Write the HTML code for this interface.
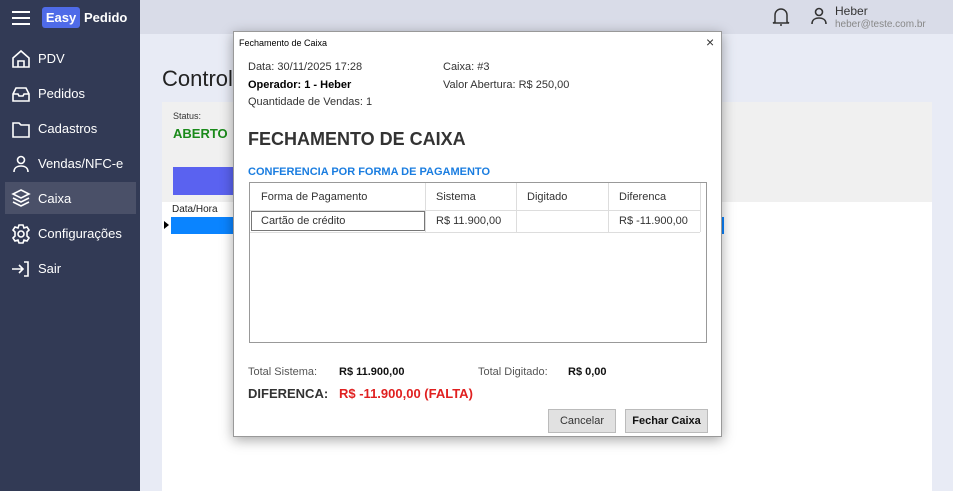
<!DOCTYPE html><html><head><style>
*{margin:0;padding:0;box-sizing:border-box}
body{width:953px;height:491px;overflow:hidden;font-family:"Liberation Sans",sans-serif;background:#e8ebf5;position:relative}
.a{position:absolute}
.side{left:0;top:0;width:140px;height:491px;background:#323a55;color:#fff}
.nav{left:5px;width:131px;height:31px;font-size:13px;display:flex;align-items:center;padding-left:5px}
.nav svg{width:22px;height:22px;margin-right:6px;fill:none;stroke:#fff;stroke-width:1.6}
.t{font-size:11px;color:#333}
</style></head><body>
<div class="a side">
<div class="a" style="left:12px;top:11px;width:18px;height:2px;background:#fff;box-shadow:0 6px 0 #fff,0 12px 0 #fff"></div>
<div class="a" style="left:42px;top:7px;width:38px;height:21px;background:#4f6be8;border-radius:3px;font-size:13px;font-weight:bold;text-align:center;line-height:21px">Easy</div>
<div class="a" style="left:84px;top:7px;font-size:13px;font-weight:bold;line-height:21px">Pedido</div>
<div class="a nav" style="top:43px"><svg viewBox="0 0 22 22"><path d="M3 10L11 3l8 7v9H3z M8 19v-6h6v6"/></svg>PDV</div>
<div class="a nav" style="top:78px"><svg viewBox="0 0 22 22"><path d="M3 11l3-6h10l3 6v7H3z M3 11h5l1 2h4l1-2h5"/></svg>Pedidos</div>
<div class="a nav" style="top:113px"><svg viewBox="0 0 22 22"><path d="M3 5h6l2 2h8v12H3z"/></svg>Cadastros</div>
<div class="a nav" style="top:148px"><svg viewBox="0 0 22 22"><circle cx="11" cy="7" r="3.5"/><path d="M4 19c0-4 3-6 7-6s7 2 7 6"/></svg>Vendas/NFC-e</div>
<div class="a nav" style="top:182px;background:#4a5068;height:32px"><svg viewBox="0 0 22 22"><path d="M11 3l8 4-8 4-8-4z M3 11l8 4 8-4 M3 15l8 4 8-4"/></svg>Caixa</div>
<div class="a nav" style="top:218px"><svg viewBox="0 0 22 22"><circle cx="11" cy="11" r="3"/><path d="M9 2h4l1 3 3-1 2 3-2 2v4l2 2-2 3-3-1-1 3H9l-1-3-3 1-2-3 2-2V9L3 7l2-3 3 1z"/></svg>Configurações</div>
<div class="a nav" style="top:253px"><svg viewBox="0 0 22 22"><path d="M2 11h11 M9 7l4 4-4 4 M14 4h4v14h-4"/></svg>Sair</div>
</div>
<div class="a" style="left:140px;top:0;width:813px;height:34px;background:#d9dce8"></div>
<svg class="a" style="left:770px;top:6px" width="22" height="22" viewBox="0 0 22 22" fill="none" stroke="#333" stroke-width="1.5"><path d="M5 16V9a6 6 0 0112 0v7l2 1H3z M10 19h2"/></svg>
<svg class="a" style="left:808px;top:5px" width="22" height="22" viewBox="0 0 22 22" fill="none" stroke="#333" stroke-width="1.6"><circle cx="11" cy="7" r="3.5"/><path d="M4 19c0-4 3-6 7-6s7 2 7 6"/></svg>
<div class="a" style="left:835px;top:4px;font-size:12px;color:#333">Heber</div>
<div class="a" style="left:835px;top:19px;font-size:10px;color:#888">heber@teste.com.br</div>
<div class="a" style="left:162px;top:66px;font-size:22px;color:#222">Controle</div>
<div class="a" style="left:162px;top:102px;width:770px;height:100px;background:#f0f0f0"></div>
<div class="a" style="left:162px;top:202px;width:770px;height:289px;background:#fff"></div>
<div class="a" style="left:173px;top:111px;font-size:9px;color:#333">Status:</div>
<div class="a" style="left:173px;top:126px;font-size:13px;color:#1a8a1a;font-weight:bold">ABERTO</div>
<div class="a" style="left:173px;top:167px;width:62px;height:28px;background:#5a62f0"></div>
<div class="a" style="left:172px;top:204px;font-size:10px;color:#222">Data/Hora</div>
<div class="a" style="left:171px;top:217px;width:553px;height:17px;background:#0a84ff"></div>
<div class="a" style="left:164px;top:221px;border-left:5px solid #000;border-top:4px solid transparent;border-bottom:4px solid transparent"></div>
<div class="a" style="left:233px;top:31px;width:489px;height:406px;background:#fff;border:1px solid #999;box-shadow:0 3px 12px rgba(0,0,0,.35)">
<div class="a" style="left:5px;top:6px;font-size:9px;color:#000">Fechamento de Caixa</div>
<div class="a" style="left:472px;top:2px;font-size:14px;color:#333">×</div>
<div class="a t" style="left:14px;top:29px">Data: 30/11/2025 17:28</div>
<div class="a t" style="left:14px;top:47px;font-weight:bold;color:#000">Operador: 1 - Heber</div>
<div class="a t" style="left:14px;top:64px">Quantidade de Vendas: 1</div>
<div class="a t" style="left:209px;top:29px">Caixa: #3</div>
<div class="a t" style="left:209px;top:47px">Valor Abertura: R$ 250,00</div>
<div class="a" style="left:14px;top:97px;font-size:18px;font-weight:bold;color:#333">FECHAMENTO DE CAIXA</div>
<div class="a" style="left:14px;top:134px;font-size:11px;font-weight:bold;color:#1a7de0">CONFERENCIA POR FORMA DE PAGAMENTO</div>
<div class="a" style="left:15px;top:150px;width:458px;height:161px;border:1px solid #999;background:#fff">
<div class="a" style="left:0;top:0;width:450px;height:28px;border-bottom:1px solid #ddd"></div>
<div class="a" style="left:175px;top:0;height:49px;border-left:1px solid #ddd"></div>
<div class="a" style="left:266px;top:0;height:49px;border-left:1px solid #ddd"></div>
<div class="a" style="left:358px;top:0;height:49px;border-left:1px solid #ddd"></div>
<div class="a" style="left:450px;top:0;height:49px;border-left:1px solid #ddd"></div>
<div class="a" style="left:0;top:49px;width:450px;border-top:1px solid #ddd"></div>
<div class="a t" style="left:11px;top:8px">Forma de Pagamento</div>
<div class="a t" style="left:186px;top:8px">Sistema</div>
<div class="a t" style="left:277px;top:8px">Digitado</div>
<div class="a t" style="left:369px;top:8px">Diferenca</div>
<div class="a" style="left:1px;top:28px;width:174px;height:20px;border:1px solid #777"></div>
<div class="a t" style="left:11px;top:32px">Cartão de crédito</div>
<div class="a t" style="left:186px;top:32px">R$ 11.900,00</div>
<div class="a t" style="left:369px;top:32px">R$ -11.900,00</div>
</div>
<div class="a t" style="left:14px;top:334px;color:#555">Total Sistema:</div>
<div class="a t" style="left:105px;top:334px;font-weight:bold;color:#111">R$ 11.900,00</div>
<div class="a t" style="left:244px;top:334px;color:#555">Total Digitado:</div>
<div class="a t" style="left:334px;top:334px;font-weight:bold;color:#111">R$ 0,00</div>
<div class="a" style="left:14px;top:354px;font-size:13px;font-weight:bold;color:#333">DIFERENCA:</div>
<div class="a" style="left:105px;top:354px;font-size:13px;font-weight:bold;color:#e02020">R$ -11.900,00 (FALTA)</div>
<div class="a" style="left:314px;top:377px;width:68px;height:24px;background:#e1e1e1;border:1px solid #bbb;font-size:11px;color:#333;text-align:center;line-height:22px">Cancelar</div>
<div class="a" style="left:391px;top:377px;width:83px;height:24px;background:#e1e1e1;border:1px solid #bbb;font-size:11px;font-weight:bold;color:#111;text-align:center;line-height:22px">Fechar Caixa</div>
</div>
</body></html>
